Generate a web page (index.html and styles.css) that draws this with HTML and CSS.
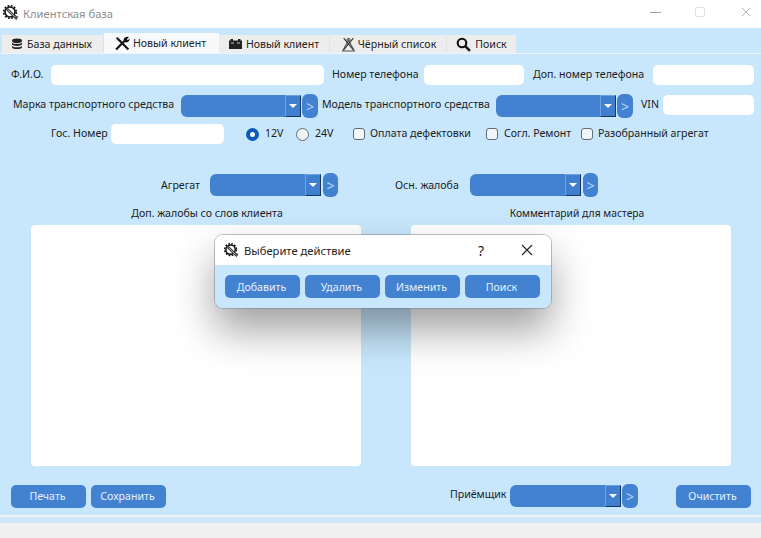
FILE: index.html
```html
<!DOCTYPE html>
<html lang="ru">
<head>
<meta charset="utf-8">
<title>Клиентская база</title>
<link rel="stylesheet" href="styles.css">
</head>
<body>
<svg class="defs" width="0" height="0" aria-hidden="true">
  <symbol id="logo" viewBox="0 0 16 16">
    <circle cx="7" cy="7" r="5" fill="none" stroke="#111" stroke-width="1.6"/>
    <circle cx="7" cy="7" r="6.3" fill="none" stroke="#111" stroke-width="1.6" stroke-dasharray="1.8 1.5"/>
    <path d="M4.5 4.5 L13 13" stroke="#444" stroke-width="2.8" stroke-linecap="round"/>
    <path d="M4.5 4.5 L13 13" stroke="#ddd" stroke-width=".7"/>
    <path d="M11.5 10.5 L15.5 11.5 L13 15.5 Z" fill="#555"/>
  </symbol>
</svg>
<div class="window">
  <header class="titlebar">
    <svg class="logo"><use href="#logo"/></svg>
    <span class="app-title">Клиентская база</span>
    <div class="win-controls">
      <span class="win-min"></span>
      <span class="win-max"></span>
      <svg class="win-close" viewBox="0 0 12 12"><path d="M1 1 L11 11 M11 1 L1 11" stroke="#a8a8a8" stroke-width="1" fill="none"/></svg>
    </div>
  </header>

  <main class="main">
    <nav class="tabs">
      <div class="tab tab-db">
        <svg class="ico" viewBox="0 0 12 12"><ellipse cx="6" cy="2.8" rx="5" ry="2.4" fill="#222"/><path d="M1 4.6 C2 6.6 10 6.6 11 4.6 V6.6 C10 8.4 2 8.4 1 6.6 Z M1 8 C2 9.8 10 9.8 11 8 V9.4 C10 11.6 2 11.6 1 9.4 Z" fill="#222"/></svg>
        База данных
      </div>
      <div class="tab tab-active">
        <svg class="ico ico-big" viewBox="0 0 14 14"><path d="M1 12.5 L9 4.5 M12.5 12.5 L4.5 4.5" stroke="#111" stroke-width="2" fill="none"/><path d="M2 1 L5.5 4 L4 5.5 L1 2 Z" fill="#111"/><path d="M8 3.5 C8.5 1.2 11 .4 13 1 L11 3 L12 4 L13.6 2.4 C14 4.5 12 6.5 9.8 6 Z" fill="#111"/></svg>
        Новый клиент
      </div>
      <div class="tab tab-car">
        <svg class="ico" viewBox="0 0 13 10"><rect x="0" y="1.5" width="13" height="8.5" fill="#222"/><rect x="1.5" y="0" width="2.5" height="2" fill="#222"/><rect x="9" y="0" width="2.5" height="2" fill="#222"/><path d="M2 4 H5 M8 4 H11" stroke="#ccc" stroke-width="1"/></svg>
        Новый клиент
      </div>
      <div class="tab tab-black">
        <svg class="ico ico-big" viewBox="0 0 14 14"><path d="M7 3 L12.5 13 H1.5 Z" fill="none" stroke="#555" stroke-width="1"/><path d="M2.5 1 L11.5 12 M11.5 1 L2.5 12" stroke="#333" stroke-width="1"/><circle cx="7" cy="3" r="1.5" fill="none" stroke="#555"/></svg>
        Чёрный список
      </div>
      <div class="tab tab-search">
        <svg class="ico ico-big" viewBox="0 0 14 14"><circle cx="5.6" cy="5.6" r="4" fill="none" stroke="#111" stroke-width="2"/><path d="M8.6 8.6 L13 13" stroke="#111" stroke-width="2.4"/></svg>
        Поиск
      </div>
    </nav>

    <section class="pane">
      <div class="row row-1">
        <label class="lbl lbl-fio">Ф.И.О.</label>
        <input class="field f-fio">
        <label class="lbl lbl-phone">Номер телефона</label>
        <input class="field f-phone">
        <label class="lbl lbl-phone2">Доп. номер телефона</label>
        <input class="field f-phone2">
      </div>

      <div class="row row-2">
        <label class="lbl lbl-brand">Марка транспортного средства</label>
        <div class="combo c-120"><span class="drop"></span></div>
        <button class="go">&gt;</button>
        <label class="lbl lbl-model">Модель транспортного средства</label>
        <div class="combo c-120"><span class="drop"></span></div>
        <button class="go">&gt;</button>
        <label class="lbl lbl-vin">VIN</label>
        <input class="field f-vin">
      </div>

      <div class="row row-3">
        <label class="lbl lbl-gos">Гос. Номер</label>
        <input class="field f-gos">
        <span class="radio radio-on r-12"></span><span class="lbl opt-12">12V</span>
        <span class="radio r-24"></span><span class="lbl opt-24">24V</span>
        <span class="check"></span><span class="lbl opt-pay">Оплата дефектовки</span>
        <span class="check"></span><span class="lbl opt-rep">Согл. Ремонт</span>
        <span class="check"></span><span class="lbl opt-dis">Разобранный агрегат</span>
      </div>

      <div class="row row-4">
        <label class="lbl lbl-agg">Агрегат</label>
        <div class="combo c-112"><span class="drop"></span></div>
        <button class="go go-gap">&gt;</button>
        <label class="lbl lbl-main">Осн. жалоба</label>
        <div class="combo c-112"><span class="drop"></span></div>
        <button class="go go-gap">&gt;</button>
      </div>

      <div class="notes">
        <div class="note note-left">
          <div class="note-title">Доп. жалобы со слов клиента</div>
          <div class="note-area"></div>
        </div>
        <div class="note note-right">
          <div class="note-title">Комментарий для мастера</div>
          <div class="note-area"></div>
        </div>
      </div>

      <div class="row row-bottom">
        <button class="btn">Печать</button>
        <button class="btn btn-save">Сохранить</button>
        <label class="lbl lbl-recv">Приёмщик</label>
        <div class="combo c-112"><span class="drop"></span></div>
        <button class="go">&gt;</button>
        <button class="btn btn-clear">Очистить</button>
      </div>
    </section>
  </main>

  <div class="status-sep"></div>
  <footer class="statusbar"></footer>

  <div class="dialog">
    <div class="dialog-head">
      <svg class="dlg-logo"><use href="#logo"/></svg>
      <span class="dlg-title">Выберите действие</span>
      <span class="dlg-help">?</span>
      <svg class="dlg-close" viewBox="0 0 12 12"><path d="M1 1 L11 11 M11 1 L1 11" stroke="#222" stroke-width="1.1" fill="none"/></svg>
    </div>
    <div class="dialog-body">
      <button class="btn">Добавить</button>
      <button class="btn">Удалить</button>
      <button class="btn">Изменить</button>
      <button class="btn">Поиск</button>
    </div>
  </div>
</div>
</body>
</html>
```
FILE: styles.css
```css
* { box-sizing: border-box; }
html, body { margin: 0; padding: 0; }
body { font-family: "Noto Sans", "Liberation Sans", sans-serif; font-size: 10.6px; color: #1c1c1c; background: #f0f0f0; overflow: hidden; }
.defs { position: absolute; }
.window { position: relative; width: 761px; height: 538px; display: flex; flex-direction: column; overflow: hidden; }

.titlebar { height: 28px; background: #fff; display: flex; align-items: center; padding-left: 3px; padding-bottom: 2px; flex: none; }
.logo { width: 16px; height: 16px; margin-right: 4px; }
.app-title { color: #8d8d8d; font-size: 11.2px; }
.win-controls { margin-left: auto; display: flex; align-items: center; padding-bottom: 2px; }
.win-min { width: 11px; height: 1px; background: #a0a0a0; margin-right: 34px; }
.win-max { width: 10px; height: 10px; border: 1px solid #e2e2e2; border-radius: 2px; margin-right: 36px; }
.win-close { width: 10px; height: 10px; margin-right: 10px; }

.main { height: 487px; background: #c8e7fd; display: flex; flex-direction: column; flex: none; }
.tabs { display: flex; align-items: flex-end; height: 26px; padding-left: 2px; flex: none; border-bottom: 1px solid #eef5fa; }
.tab { height: 18px; background: #ededed; display: flex; align-items: center; justify-content: center; border-right: 1px solid #dfe3e6; color: #222; font-size: 10.6px; white-space: nowrap; }
.tab-db { width: 102px; padding-right: 2px; }
.tab-active { width: 115px; height: 20px; background: #f7f9fa; border-right: 0; padding-right: 2px; }
.tab-car { width: 111px; }
.tab-black { width: 117px; padding-left: 1px; }
.tab-search { width: 69px; border-right: 0; }
.ico { width: 12px; height: 12px; margin-right: 4px; flex: none; }
.ico-big { width: 15px; height: 15px; }
.tab-active .ico { margin-right: 3px; }
.tab-car .ico { width: 13px; height: 10px; }
.tab-black .ico { margin-right: 2px; }

.pane { padding-top: 11px; flex: 1; display: flex; flex-direction: column; }
.row { display: flex; align-items: center; flex: none; }
.lbl { white-space: nowrap; font-size: 10.6px; color: #1c1c1c; padding-bottom: 2px; }
.field { border: 0; background: #fff; border-radius: 5px; height: 20px; padding: 0; outline: 0; display: block; }

.row-1 { padding-left: 11px; height: 20px; }
.lbl-fio { width: 40px; }
.f-fio { width: 273px; }
.lbl-phone { margin-left: 8px; width: 92px; }
.f-phone { width: 100px; }
.lbl-phone2 { margin-left: 9px; width: 120px; }
.f-phone2 { width: 101px; }

.row-2 { padding-left: 13px; height: 24px; margin-top: 9px; }
.row-2 .lbl, .row-bottom .lbl { padding-bottom: 4px; }
.row-2 .field { margin-top: -3px; }
.lbl-brand { width: 168px; }
.lbl-model { margin-left: 4px; width: 174px; }
.lbl-vin { margin-left: 8px; width: 22px; }
.f-vin { width: 91px; }

.combo { height: 22px; background: #4382d1; border-radius: 6px 0 0 6px; position: relative; flex: none; }
.c-120 { width: 120px; }
.c-112 { width: 111px; }
.drop { display: block; position: absolute; right: 0; top: 0; width: 16px; height: 22px; background: #3f7fcd; border-top: 1px solid #6fa2e0; border-left: 1px solid #6fa2e0; border-right: 1px solid #17375f; border-bottom: 1px solid #17375f; }
.drop::after { content: ""; position: absolute; left: 3px; top: 8px; border-style: solid; border-width: 4px 4px 0; border-color: #fff transparent transparent; }
.go { width: 16px; height: 24px; flex: none; margin: 0 0 0 1px; padding: 0; border: 0; border-radius: 6px; background: #4382d1; color: #b6d5f7; font: 14px "Noto Sans", sans-serif; }
.go-gap { margin-left: 2px; width: 15px; }

.row-3 { padding-left: 51px; height: 20px; margin-top: 6px; }
.lbl-gos { width: 60px; }
.f-gos { width: 113px; }
.radio { width: 13px; height: 13px; border-radius: 50%; border: 1px solid #5f6d78; background: #eef3f7; flex: none; }
.radio-on { border: 4px solid #0b5cb8; background: #fff; }
.r-12 { margin-left: 22px; }
.opt-12 { margin-left: 6px; width: 31px; }
.opt-24 { margin-left: 6px; width: 38px; }
.check { width: 12px; height: 12px; border: 1px solid #5f6d78; border-radius: 3px; background: #f3f6f8; flex: none; }
.opt-pay { margin-left: 5px; width: 116px; }
.opt-rep { margin-left: 6px; width: 77px; }
.opt-dis { margin-left: 5px; }

.row-4 { padding-left: 161px; height: 24px; margin-top: 29px; }
.row-4 .lbl { padding-bottom: 0; }
.lbl-agg { width: 49px; }
.lbl-main { margin-left: 57px; width: 75px; }

.notes { display: flex; margin-top: 9px; padding-left: 31px; flex: none; }
.note-title { text-align: center; height: 19px; line-height: 15px; font-size: 10.6px; }
.note-area { background: #fff; height: 241px; border-radius: 4px; }
.note-left { width: 330px; }
.note-left .note-title { width: 352px; }
.note-right { width: 320px; margin-left: 50px; }
.note-right .note-title { margin-left: 6px; width: 320px; font-size: 10.3px; }

.btn { width: 75px; height: 23px; flex: none; margin: 0; padding: 0 2px 0 0; border: 0; border-radius: 5px; background: #4382d1; color: #e3f0fc; font: 10.6px "Noto Sans", sans-serif; }
.row-bottom { padding-left: 11px; height: 24px; margin-top: 18px; }
.btn-save { margin-left: 5px; }
.lbl-recv { margin-left: 284px; width: 60px; }
.btn-clear { margin-left: 38px; }

.status-sep { height: 8px; flex: none; background: #cfe7f9; border-top: 2px solid #f0f4f7; }
.statusbar { flex: 1; background: #f0f0f0; }

.dialog { position: absolute; left: 215px; top: 235px; width: 336px; height: 73px; border-radius: 8px; overflow: hidden; box-shadow: 0 0 0 1px rgba(120,130,140,.5), 0 22px 42px rgba(0,0,0,.38); }
.dialog-head { height: 30px; background: #fff; display: flex; align-items: center; padding-left: 9px; }
.dlg-logo { width: 15px; height: 15px; margin-right: 5px; }
.dlg-title { font-size: 11.2px; color: #1c1c1c; width: 234px; }
.dlg-help { font-size: 14px; color: #222; width: 28px; }
.dlg-close { width: 12px; height: 12px; margin-left: 15px; }
.dialog-body { height: 43px; background: #c8e7fd; display: flex; gap: 5px; padding: 10px 10px 0; }
```
